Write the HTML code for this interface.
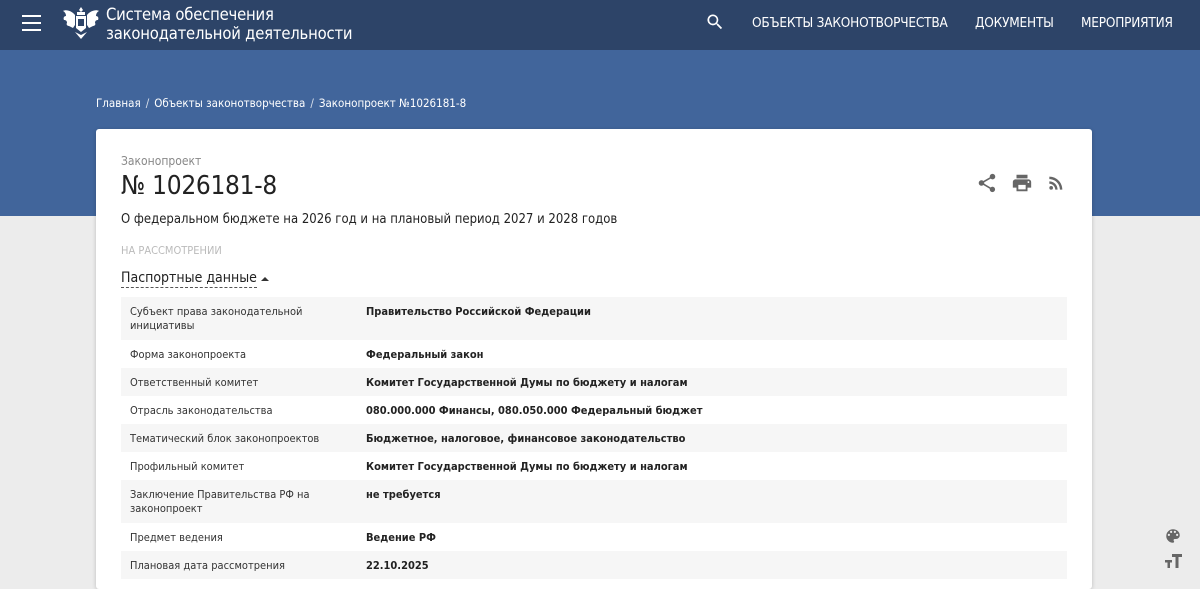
<!DOCTYPE html>
<html><head><meta charset="utf-8">
<style>
*{margin:0;padding:0;box-sizing:border-box}
body{width:1200px;height:575px;overflow:hidden;background:#ececec;font-family:"Liberation Sans Narrow","DejaVu Sans Condensed","Liberation Sans",sans-serif;color:#222;position:relative}
.hdr{position:absolute;left:0;top:0;width:1200px;height:50px;background:#2d4468;color:#fff}
.band{position:absolute;left:0;top:50px;width:1200px;height:166px;background:#41659b}
.burger{position:absolute;left:22px;top:15px;width:19px}
.burger i{display:block;height:2px;background:#fff;margin-bottom:5px}
.title{position:absolute;left:106px;top:5px;font-size:16.5px;line-height:19px;letter-spacing:-.2px}
.nav{position:absolute;top:15px;font-size:13.5px;color:#fff;letter-spacing:-.2px}
.crumbs{position:absolute;left:96px;top:96px;font-size:11.5px;color:#fff}
.crumbs span{margin:0 5px;opacity:.8}
.card{position:absolute;left:96px;top:129px;width:996px;height:460px;background:#fff;border-radius:3px;box-shadow:0 1px 4px rgba(0,0,0,.2)}
.sub{position:absolute;left:25px;top:25px;font-size:12px;color:#888}
.num{position:absolute;left:25px;top:42px;font-size:26px;color:#222;letter-spacing:-.3px}
.desc{position:absolute;left:25px;top:83px;font-size:13px}
.st{position:absolute;left:25px;top:115px;font-size:11px;color:#bbb}
.pas{position:absolute;left:25px;top:141px;font-size:14px;border-bottom:1px dashed #555;line-height:17px}
.tri{position:absolute;left:165px;top:148px;border:4px solid transparent;border-bottom:4px solid #333;border-top:0}
table{position:absolute;left:25px;top:168px;width:946px;border-collapse:collapse;font-size:11px}
td{padding:8px 9px 6px;vertical-align:top;line-height:14px}
tr.two td{padding-bottom:7px}
td:first-child{width:236px;color:#333}
td:last-child{font-weight:bold;color:#222}
tr:nth-child(odd){background:#f6f6f6}
.icons svg{position:absolute;fill:#666}
</style></head><body>
<div class="hdr">
 <div class="burger"><i></i><i></i><i></i></div>
 <svg style="position:absolute;left:62px;top:5px" width="38" height="36" viewBox="0 0 38 36" fill="#fff">
  <path d="M19 2l2 3-2 2-2-2z M15 7h8v3h-8z"/>
  <path d="M13 10c-3-4-9-6-12-4 2 1 3 3 3 5-2 0-3 2-2 4 2 0 3 1 3 3-1 1 0 3 2 3l4 2 2-3z"/>
  <path d="M25 10c3-4 9-6 12-4-2 1-3 3-3 5 2 0 3 2 2 4-2 0-3 1-3 3 1 1 0 3-2 3l-4 2-2-3z"/>
  <path d="M14 11h10v12l-5 4-5-4z" fill="#fff"/>
  <rect x="16" y="14" width="6" height="7" fill="#2d4468"/>
  <path d="M13 27l6 7 6-7-6 3z"/>
 </svg>
 <div class="title">Система обеспечения<br>законодательной деятельности</div>
 <svg style="position:absolute;left:705px;top:12px" width="20" height="20" viewBox="0 0 24 24" fill="#fff"><path d="M15.5 14h-.8l-.3-.3A6.5 6.5 0 1 0 9.5 16a6.5 6.5 0 0 0 4.2-1.6l.3.3v.8l5 5 1.5-1.5zm-6 0a4.5 4.5 0 1 1 0-9 4.5 4.5 0 0 1 0 9z"/></svg>
 <div class="nav" style="left:752px">ОБЪЕКТЫ ЗАКОНОТВОРЧЕСТВА</div>
 <div class="nav" style="left:975px">ДОКУМЕНТЫ</div>
 <div class="nav" style="left:1081px">МЕРОПРИЯТИЯ</div>
</div>
<div class="band"></div>
<div class="crumbs">Главная<span>/</span>Объекты законотворчества<span>/</span>Законопроект №1026181-8</div>
<div class="card">
 <div class="sub">Законопроект</div>
 <div class="num">№ 1026181-8</div>
 <div class="desc">О федеральном бюджете на 2026 год и на плановый период 2027 и 2028 годов</div>
 <div class="st">НА РАССМОТРЕНИИ</div>
 <div class="pas">Паспортные данные</div><div class="tri"></div>
 <div class="icons">
  <svg style="left:880px;top:43px" width="22" height="22" viewBox="0 0 24 24"><path d="M18 16.1c-.8 0-1.4.3-2 .8l-7.1-4.2c.1-.2.1-.5.1-.7s0-.5-.1-.7L16 7.2c.5.5 1.2.8 2 .8 1.7 0 3-1.3 3-3s-1.3-3-3-3-3 1.3-3 3c0 .2 0 .5.1.7L8 9.8C7.5 9.3 6.8 9 6 9c-1.7 0-3 1.3-3 3s1.3 3 3 3c.8 0 1.5-.3 2-.8l7.1 4.2c-.1.2-.1.4-.1.6 0 1.6 1.300 2.9 2.9 2.9s2.9-1.3 2.9-2.9-1.2-2.9-2.8-2.9z"/></svg>
  <svg style="left:915px;top:43px" width="22" height="22" viewBox="0 0 24 24"><path d="M19 8H5c-1.7 0-3 1.3-3 3v6h4v4h12v-4h4v-6c0-1.7-1.3-3-3-3zm-3 11H8v-5h8v5zm3-7c-.6 0-1-.4-1-1s.4-1 1-1 1 .4 1 1-.4 1-1 1zm-1-9H6v4h12V3z"/></svg>
  <svg style="left:950px;top:44px" width="20" height="20" viewBox="0 0 24 24"><circle cx="6.2" cy="17.8" r="2.2"/><path d="M4 4.4v2.9c7 0 12.7 5.7 12.7 12.7h2.9C19.6 11.4 12.6 4.4 4 4.4zm0 5.7v2.8c3.9 0 7.1 3.2 7.1 7.1h2.8c0-5.5-4.4-9.9-9.9-9.9z"/></svg>
 </div>
 <table>
  <tr class="two"><td>Субъект права законодательной инициативы</td><td>Правительство Российской Федерации</td></tr>
  <tr><td>Форма законопроекта</td><td>Федеральный закон</td></tr>
  <tr><td>Ответственный комитет</td><td>Комитет Государственной Думы по бюджету и налогам</td></tr>
  <tr><td>Отрасль законодательства</td><td>080.000.000 Финансы, 080.050.000 Федеральный бюджет</td></tr>
  <tr><td>Тематический блок законопроектов</td><td>Бюджетное, налоговое, финансовое законодательство</td></tr>
  <tr><td>Профильный комитет</td><td>Комитет Государственной Думы по бюджету и налогам</td></tr>
  <tr class="two"><td>Заключение Правительства РФ на законопроект</td><td>не требуется</td></tr>
  <tr><td>Предмет ведения</td><td>Ведение РФ</td></tr>
  <tr><td>Плановая дата рассмотрения</td><td>22.10.2025</td></tr>
 </table>
</div>
<svg style="position:absolute;left:1164px;top:527px;fill:#666" width="18" height="18" viewBox="0 0 24 24"><path d="M12 3a9 9 0 0 0 0 18c.8 0 1.5-.7 1.5-1.5 0-.4-.1-.7-.4-1-.2-.3-.4-.6-.4-1 0-.8.7-1.5 1.5-1.5H16c2.8 0 5-2.2 5-5 0-4.4-4-8-9-8zm-5.5 9a1.5 1.5 0 1 1 0-3 1.5 1.5 0 0 1 0 3zm3-4a1.5 1.5 0 1 1 0-3 1.5 1.5 0 0 1 0 3zm5 0a1.5 1.5 0 1 1 0-3 1.5 1.5 0 0 1 0 3zm3 4a1.5 1.5 0 1 1 0-3 1.5 1.5 0 0 1 0 3z"/></svg>
<svg style="position:absolute;left:1164px;top:553px;fill:#666" width="18" height="16" viewBox="0 0 18 16"><path d="M8 1h10v3h-3.5v11h-3V4H8z M1 7h7v2.5H6V15H3.5V9.5H1z"/></svg>
</body></html>
